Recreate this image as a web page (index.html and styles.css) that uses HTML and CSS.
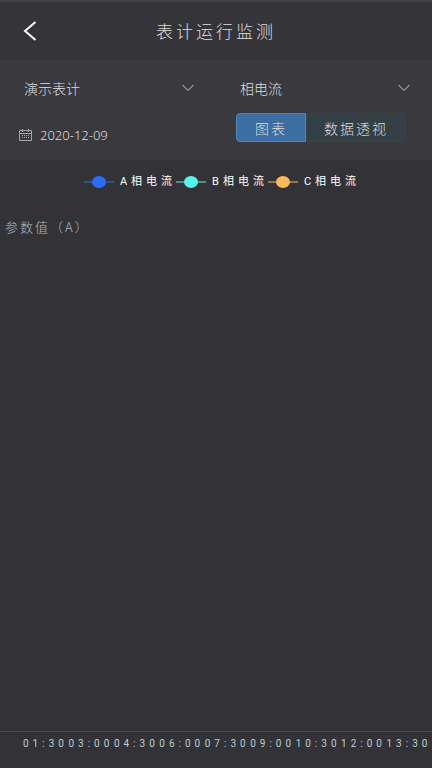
FILE: index.html
```html
<!DOCTYPE html>
<html lang="zh-CN">
<head>
  <meta charset="utf-8">
  <meta name="viewport" content="width=device-width, initial-scale=1">
  <title>表计运行监测</title>
  <link rel="stylesheet" href="styles.css">
</head>
<body>
  <header class="header">
    <button class="back" type="button" aria-label="返回">
      <svg width="14" height="20" viewBox="0 0 14 20" fill="none" stroke="#fff" stroke-width="2"><path d="M12.5 1L2 10l10.5 9"/></svg>
    </button>
    <h1 class="title">表计运行监测</h1>
  </header>

  <form class="filters">
    <div class="field">
      <select class="select" aria-label="表计">
        <option>演示表计</option>
      </select>
      <svg width="12" height="8" viewBox="0 0 12 8" fill="none" stroke="#d2d2d5"><path d="M.5 1L6 6.5 11.5 1"/></svg>
    </div>
    <div class="field">
      <select class="select" aria-label="参数">
        <option>相电流</option>
      </select>
      <svg width="12" height="8" viewBox="0 0 12 8" fill="none" stroke="#d2d2d5"><path d="M.5 1L6 6.5 11.5 1"/></svg>
    </div>
    <div class="date">
      <svg width="13" height="12" viewBox="0 0 13 12" fill="none" stroke="#a5a5a9"><path d="M.5 1.5h12v10H.5zM.5 4.5h12M3.5 0v3M9.5 0v3"/><path stroke-dasharray="1 1" d="M3 6.5h8M3 8.5h8"/></svg>
      <input class="date-input" type="text" value="2020-12-09" aria-label="日期">
    </div>
    <div class="tabs">
      <button class="tab active" type="button">图表</button>
      <button class="tab" type="button">数据透视</button>
    </div>
  </form>

  <main class="chart">
    <ul class="legend">
      <li class="legend-item phase-a">
        <svg width="30" height="12" viewBox="0 0 30 12" fill="currentColor"><path d="M0 5.5h30v1H0z"/><ellipse cx="15" cy="6" rx="7" ry="6"/></svg>
        <span>A相电流</span>
      </li>
      <li class="legend-item phase-b">
        <svg width="30" height="12" viewBox="0 0 30 12" fill="currentColor"><path d="M0 5.5h30v1H0z"/><ellipse cx="15" cy="6" rx="7" ry="6"/></svg>
        <span>B相电流</span>
      </li>
      <li class="legend-item phase-c">
        <svg width="30" height="12" viewBox="0 0 30 12" fill="currentColor"><path d="M0 5.5h30v1H0z"/><ellipse cx="15" cy="6" rx="7" ry="6"/></svg>
        <span>C相电流</span>
      </li>
    </ul>
    <div class="axis-name">参数值（A）</div>
    <div class="plot"></div>
    <ul class="axis">
      <li>01:30</li>
      <li>03:00</li>
      <li>04:30</li>
      <li>06:00</li>
      <li>07:30</li>
      <li>09:00</li>
      <li>10:30</li>
      <li>12:00</li>
      <li>13:30</li>
    </ul>
  </main>
</body>
</html>
```

FILE: styles.css
```css
* { box-sizing: border-box; }
body {
  display: flex;
  flex-direction: column;
  min-height: 100vh;
  margin: 0;
  background: #333237;
  color: #dededf;
  font-family: "Noto Sans CJK SC", sans-serif;
  font-size: 14px;
  font-weight: 300;
}
button, input, select { font: inherit; color: inherit; }
ul { list-style: none; margin: 0; padding: 0; }

.header {
  display: grid;
  grid-template-columns: 60px 1fr 60px;
  align-items: center;
  height: 60px;
  background: #353439;
  border-top: 2px solid #434247;
}
.back {
  display: flex;
  align-items: center;
  height: 40px;
  padding: 0 0 0 23px;
  background: none;
  border: none;
  cursor: pointer;
}
.title {
  margin: 0;
  font-size: 17px;
  font-weight: 300;
  line-height: 24px;
  letter-spacing: 3px;
  text-align: center;
}

.filters {
  display: grid;
  grid-template-columns: 1fr 1fr;
  align-items: center;
  height: 100px;
  padding: 8px 0 12px;
  background: #3a393e;
}
.field {
  display: flex;
  align-items: center;
  padding: 0 22px 0 24px;
}
.select {
  flex: 1;
  min-width: 0;
  height: 30px;
  padding: 0;
  appearance: none;
  background: none;
  border: none;
}
.date {
  display: flex;
  align-items: center;
  gap: 8px;
  padding: 14px 0 0 19px;
}
.date-input {
  width: 120px;
  padding: 0;
  background: none;
  border: none;
  font-family: "Noto Sans", sans-serif;
  font-size: 13px;
}
.tabs {
  display: flex;
  justify-self: start;
  margin-left: 20px;
}
.tab {
  height: 29px;
  padding: 0 17px;
  background: #343f46;
  border: 1px solid #36434a;
  border-radius: 0 4px 4px 0;
  letter-spacing: 2px;
  line-height: 1;
  cursor: pointer;
}
.tab.active {
  padding: 0 18px;
  background: #3c6da3;
  border-color: #4e86c2;
  border-radius: 4px 0 0 4px;
}

.chart {
  display: flex;
  flex: 1;
  flex-direction: column;
}
.legend {
  display: flex;
  justify-content: center;
  padding: 12px 0 0 12px;
  font-family: Roboto, "Noto Sans CJK SC", sans-serif;
  font-size: 11px;
  line-height: 20px;
  letter-spacing: 4px;
}
.legend-item {
  display: flex;
  align-items: center;
  gap: 6px;
}
.legend-item span { color: #fff; font-weight: 400; }
.phase-a { color: #2a6cf5; }
.phase-b { color: #55f5ea; }
.phase-c { color: #ffb85c; }

.axis-name {
  margin-top: 25px;
  padding-left: 5px;
  color: #a3bdc4;
  font-size: 13px;
  line-height: 20px;
  letter-spacing: 2px;
}
.plot {
  flex: 1;
  border-bottom: 1px solid #45484c;
}
.axis {
  display: flex;
  height: 36px;
  padding-left: 23px;
  color: #b8d0d5;
  font-family: Roboto, sans-serif;
  font-size: 10px;
  font-weight: 400;
  line-height: 24px;
  letter-spacing: 4px;
}
.axis li { flex: 1 0 0; }
```
